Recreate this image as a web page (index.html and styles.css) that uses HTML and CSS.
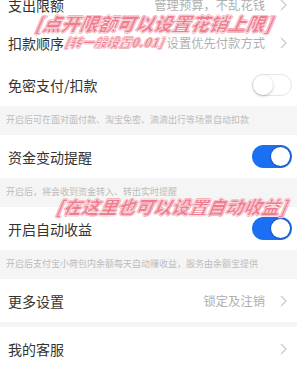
FILE: index.html
```html
<!DOCTYPE html>
<html lang="zh-CN">
<head>
<meta charset="utf-8">
<link rel="stylesheet" href="styles.css">
</head>
<body>
<div class="page">
  <div class="list">
    <div class="row row-short">
      <span class="label">支出限额</span>
      <span class="right"><span class="hint">管理预算，不乱花钱</span><svg class="chev" viewBox="0 0 7 12"><polyline points="1,1 6,6 1,11"/></svg></span>
    </div>
    <div class="row row-short">
      <span class="label">扣款顺序</span>
      <span class="right"><span class="hint">设置优先付款方式</span><svg class="chev" viewBox="0 0 7 12"><polyline points="1,1 6,6 1,11"/></svg></span>
    </div>
    <div class="row">
      <span class="label">免密支付/扣款</span>
      <span class="toggle"><span class="knob"></span></span>
    </div>
    <div class="desc">开启后可在面对面付款、淘宝免密、滴滴出行等场景自动扣款</div>
    <div class="row">
      <span class="label">资金变动提醒</span>
      <span class="toggle on"><span class="knob"></span></span>
    </div>
    <div class="desc">开启后，将会收到资金转入、转出实时提醒</div>
    <div class="row">
      <span class="label">开启自动收益</span>
      <span class="toggle on"><span class="knob"></span></span>
    </div>
    <div class="desc">开启后支付宝小荷包内余额每天自动赚收益，服务由余额宝提供</div>
    <div class="row">
      <span class="label">更多设置</span>
      <span class="right"><span class="hint">锁定及注销</span><svg class="chev" viewBox="0 0 7 12"><polyline points="1,1 6,6 1,11"/></svg></span>
    </div>
    <div class="gap"></div>
    <div class="row">
      <span class="label">我的客服</span>
      <span class="right"><svg class="chev" viewBox="0 0 7 12"><polyline points="1,1 6,6 1,11"/></svg></span>
    </div>
  </div>
  <div class="note note-1">[点开限额可以设置花销上限]</div>
  <div class="note note-2">[转一般设置0.01]</div>
  <div class="note note-3">[在这里也可以设置自动收益]</div>
</div>
</body>
</html>
```

FILE: styles.css
```css
html, body {
  margin: 0;
  padding: 0;
  background: #ffffff;
  overflow: hidden;
}
body {
  font-family: "Noto Sans CJK SC", "Noto Sans", sans-serif;
  width: 300px;
  height: 367px;
}
.page {
  position: relative;
  width: 300px;
  height: 367px;
  overflow: hidden;
}
.list {
  display: flex;
  flex-direction: column;
  margin-top: -14px;
}
.row {
  display: flex;
  align-items: center;
  justify-content: space-between;
  height: 43px;
  padding: 0 8px 0 8px;
  background: #fff;
  flex-shrink: 0;
}
.row-short {
  height: 38px;
}
.row-short + .row:not(.row-short) {
  margin-top: 1px;
}
.label {
  font-size: 14px;
  color: #333333;
  line-height: 1;
}
.right {
  display: flex;
  align-items: center;
  gap: 15px;
  padding-right: 5px;
}
.hint {
  font-size: 12.3px;
  color: #b0b0b0;
}
.chev {
  width: 7px;
  height: 12px;
}
.chev polyline {
  fill: none;
  stroke: #c8c8c8;
  stroke-width: 1.2;
}
.desc {
  height: 29px;
  box-sizing: border-box;
  padding: 7px 0 0 6px;
  margin-right: 3px;
  background: #f5f5f5;
  font-size: 9px;
  line-height: 14px;
  color: #bcbcbc;
  flex-shrink: 0;
}
.gap {
  height: 5px;
  margin-right: 3px;
  background: #f5f5f5;
  flex-shrink: 0;
}
.toggle {
  position: relative;
  width: 40px;
  height: 22px;
  box-sizing: border-box;
  border-radius: 11px;
  border: 1px solid #e6e6e6;
  background: #fff;
  display: flex;
  align-items: center;
  padding: 0;
}
.toggle .knob {
  width: 20px;
  height: 20px;
  border-radius: 50%;
  background: #fff;
  box-shadow: 0 1px 3px rgba(0, 0, 0, 0.25);
}
.toggle.on {
  background: #1b6ff2;
  border-color: #1b6ff2;
  height: 23px;
  justify-content: flex-end;
}
.toggle.on .knob {
  width: 19px;
  height: 19px;
  margin-right: 1px;
  box-shadow: 0 0 0 1px rgba(20, 40, 90, 0.35);
}
.note {
  position: absolute;
  font-weight: 900;
  font-style: italic;
  color: #ef7d8f;
  white-space: nowrap;
  -webkit-text-stroke: 0.4px #ffffff;
  text-shadow: 1px 0 0 #f4a9b3, -1px 0 0 #f4a9b3, 0 1px 0 #f4a9b3, 0 -1px 0 #f4a9b3;
  transform: skewX(-10deg);
  transform-origin: left bottom;
  line-height: 1;
}
.note-1 {
  left: 34px;
  top: 14px;
  font-size: 18.5px;
}
.note-2 {
  left: 64px;
  top: 36px;
  font-size: 12px;
  letter-spacing: 0.3px;
}
.note-3 {
  left: 55px;
  top: 197px;
  font-size: 18px;
}
```
